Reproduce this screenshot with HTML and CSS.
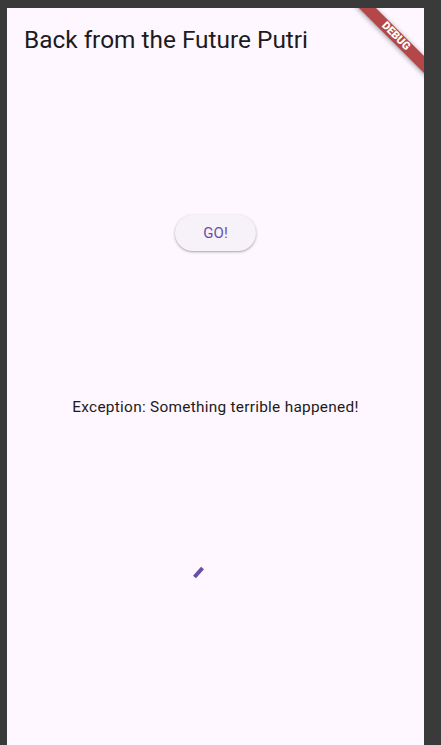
FILE: index.html
```html
<!DOCTYPE html>
<html>
<head>
<meta charset="utf-8">
<link rel="stylesheet" href="styles.css">
</head>
<body>
<div class="app">
  <header class="appbar">
    <h1 class="title">Back from the Future Putri</h1>
  </header>
  <main class="content">
    <button class="go-btn">GO!</button>
    <p class="message">Exception: Something terrible happened!</p>
    <svg class="spinner" width="48" height="40" viewBox="0 0 48 40">
      <path d="M2.5 17 L10.5 8" stroke="#6750a4" stroke-width="4" fill="none"/>
    </svg>
  </main>
  <div class="banner-anchor">
    <div class="banner">DEBUG</div>
  </div>
</div>
</body>
</html>
```
FILE: styles.css
```css
html, body {
  margin: 0;
  padding: 0;
  background: #3a3a3a;
  height: 100%;
  overflow: hidden;
}
body {
  font-family: Roboto, "Noto Sans", sans-serif;
}
.app {
  position: relative;
  margin: 8px 0 0 7px;
  width: 417px;
  height: 737px;
  background: #fef7ff;
  overflow: hidden;
}
.appbar {
  height: 62px;
  display: flex;
  align-items: center;
  padding-left: 17px;
}
.title {
  margin: 0;
  font-size: 24.4px;
  font-weight: 400;
  color: #1d1b20;
  letter-spacing: 0;
}
.content {
  display: flex;
  flex-direction: column;
  align-items: center;
}
.go-btn {
  margin-top: 145px;
  width: 81px;
  height: 36px;
  border: none;
  border-radius: 18px;
  background: #f7f2fa;
  color: #6750a4;
  font-family: Roboto, sans-serif;
  font-size: 15px;
  font-weight: 400;
  letter-spacing: 0.1px;
  box-shadow: 0 1px 2px rgba(0,0,0,0.25), 0 1px 3px 1px rgba(0,0,0,0.08);
  padding: 0;
}
.message {
  margin: 146px 0 0;
  font-size: 15.4px;
  line-height: 20px;
  letter-spacing: 0.27px;
  color: #1d1b20;
}
.spinner {
  margin-top: 143px;
  overflow: visible;
}
.banner-anchor {
  position: absolute;
  top: 0;
  right: 0;
  width: 0;
  height: 0;
  transform: rotate(45deg);
  transform-origin: 0 0;
}
.banner {
  position: absolute;
  left: -50px;
  top: 34px;
  width: 100px;
  height: 12px;
  background: #b3474a;
  box-shadow: 0 1px 5px rgba(0,0,0,0.4);
  color: #fff;
  font-family: Roboto, sans-serif;
  font-size: 11px;
  font-weight: 900;
  line-height: 12px;
  text-align: center;
}
```
